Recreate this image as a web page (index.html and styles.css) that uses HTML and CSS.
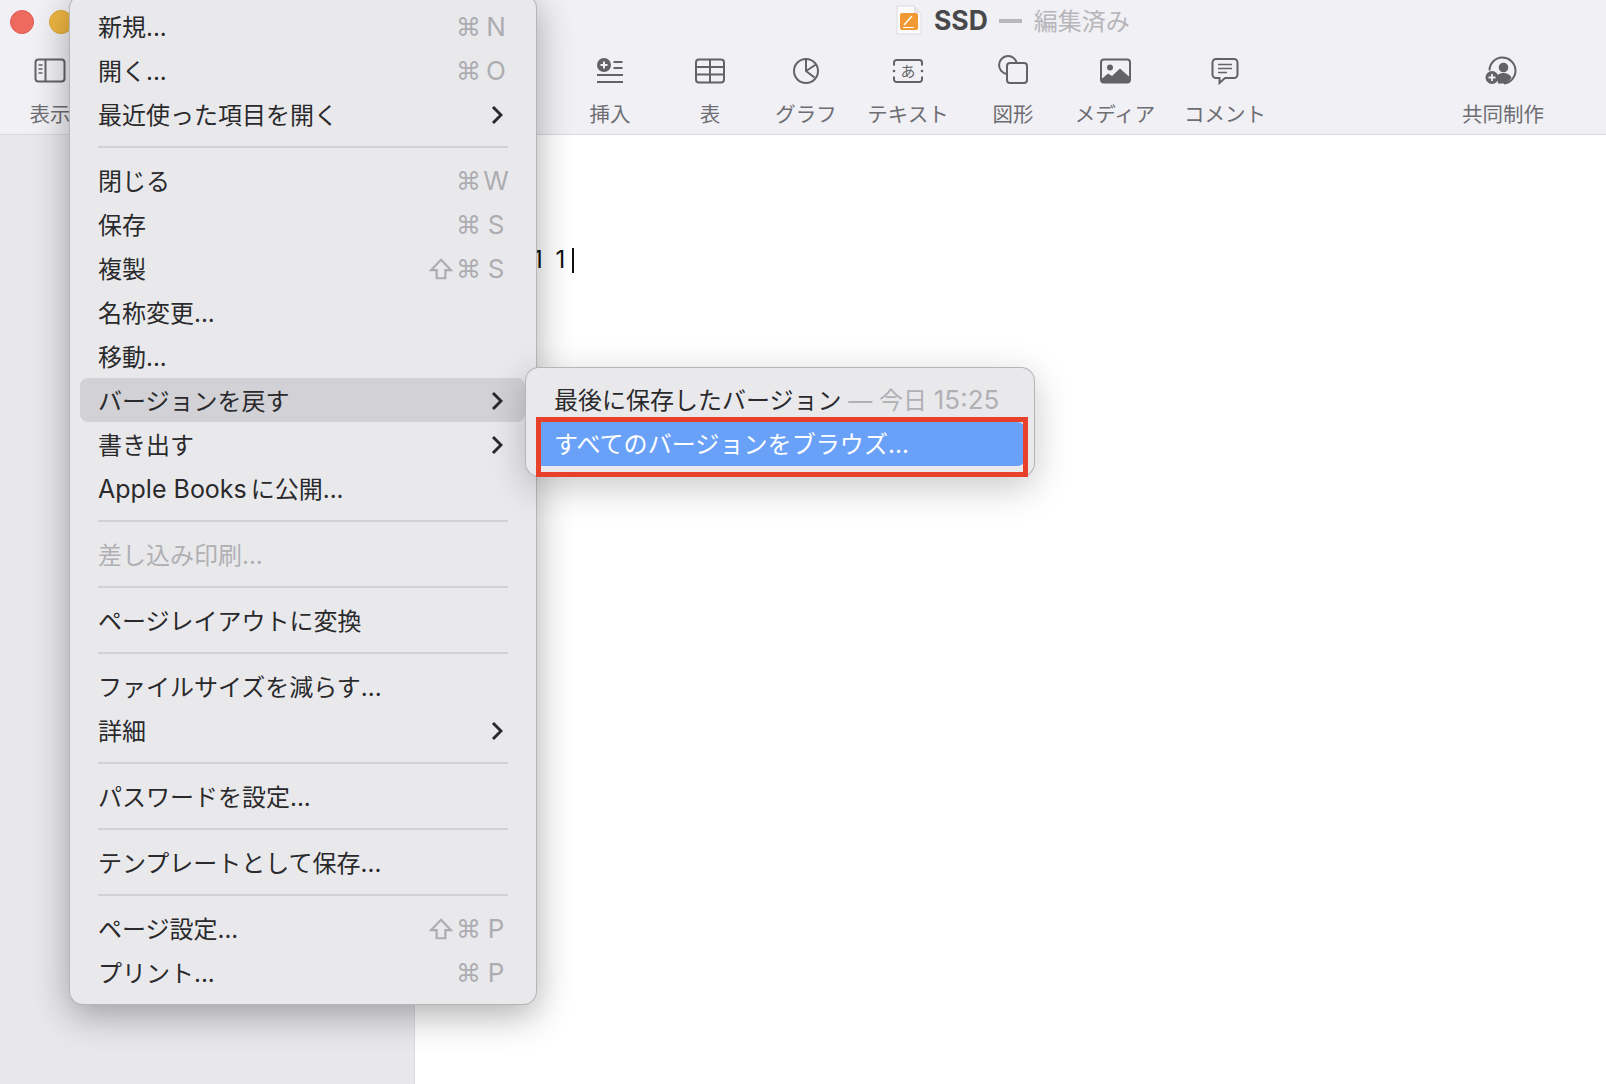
FILE: index.html
```html
<!DOCTYPE html>
<html lang="ja">
<head>
<meta charset="utf-8">
<title>SSD — 編集済み</title>
<link rel="stylesheet" href="styles.css">
</head>
<body>
<div class="window">
  <header class="toolbar">
    <div class="titlebar">
      <div class="lights"><span class="light red"></span><span class="light yellow"></span></div>
      <div class="title">
        <svg class="doc-icon" width="28" height="30" viewBox="0 0 28 30">
          <path d="M2 1h17l7 7v21H2z" fill="#fbfbfb" stroke="#dcdce0" stroke-width="1"/>
          <path d="M19 1l7 7h-7z" fill="#e4e4e8"/>
          <rect x="5" y="8" width="18" height="17" rx="2" fill="#f19a35"/>
          <path d="M9 20l8-9" stroke="#fff" stroke-width="1.4"/>
          <path d="M8 22.500h11" stroke="#fff" stroke-width="1"/>
        </svg>
        <span class="doc-name">SSD</span>
        <span class="doc-dash"></span>
        <span class="doc-state">編集済み</span>
      </div>
    </div>
    <div class="tools">
      <div class="tool">
        <svg width="32" height="26" viewBox="0 0 32 26"><rect x="1.500" y="1.500" width="29" height="22" rx="3" fill="none" stroke="#636366" stroke-width="2"/><path d="M11.500 2v21" stroke="#636366" stroke-width="2"/><path d="M4.500 7h4M4.500 11h4M4.500 15h4" stroke="#636366" stroke-width="1.300"/></svg>
        <span>表示</span>
      </div>
      <div class="tool-gap"></div>
      <div class="tool">
        <svg width="28" height="26" viewBox="0 0 28 26"><circle cx="8" cy="7" r="7" fill="#636366"/><path d="M8 3.500v7M4.500 7h7" stroke="#f0f0f5" stroke-width="2"/><path d="M17.500 4h9M17.500 10h9M1 17h26M1 24h26" stroke="#636366" stroke-width="2"/></svg>
        <span>挿入</span>
      </div>
      <div class="tool">
        <svg width="30" height="25" viewBox="0 0 30 25"><rect x="1" y="1" width="28" height="23" rx="3" fill="none" stroke="#636366" stroke-width="2"/><path d="M1 8.500h28M1 16h28M15 1v23" stroke="#636366" stroke-width="2"/></svg>
        <span>表</span>
      </div>
      <div class="tool">
        <svg width="28" height="28" viewBox="0 0 28 28"><circle cx="14" cy="14" r="12" fill="none" stroke="#636366" stroke-width="2"/><path d="M14 2.500V14l8.500 6.500M14 14l10-6.500" fill="none" stroke="#636366" stroke-width="2"/></svg>
        <span>グラフ</span>
      </div>
      <div class="tool">
        <svg class="tool-text" width="32" height="25" viewBox="0 0 32 25"><path d="M2 7V4a2.500 2.500 0 0 1 2.500-2.500h23A2.500 2.500 0 0 1 30 4v3M2 18v3a2.500 2.500 0 0 0 2.500 2.500h23A2.500 2.500 0 0 0 30 21v-3" fill="none" stroke="#636366" stroke-width="2"/><circle cx="2" cy="12.500" r="1.300" fill="#636366"/><circle cx="30" cy="12.500" r="1.300" fill="#636366"/><text x="16" y="18" text-anchor="middle" class="icon-glyph">あ</text></svg>
        <span>テキスト</span>
      </div>
      <div class="tool">
        <svg width="30" height="30" viewBox="0 1 30 30"><path d="M9 19A9 9 0 1 1 19 9" fill="none" stroke="#636366" stroke-width="2"/><rect x="9" y="8" width="20" height="20" rx="3" fill="none" stroke="#636366" stroke-width="2"/></svg>
        <span>図形</span>
      </div>
      <div class="tool">
        <svg width="31" height="25" viewBox="0 0 31 25"><rect x="1" y="1" width="29" height="23" rx="3" fill="none" stroke="#636366" stroke-width="2"/><circle cx="10" cy="9" r="3" fill="#636366"/><path d="M1 21l7-6 4 2.500L20 10l10 9v3a2 2 0 0 1-2 2H3a2 2 0 0 1-2-2z" fill="#636366"/></svg>
        <span>メディア</span>
      </div>
      <div class="tool">
        <svg width="28" height="27" viewBox="0 0 28 27"><path d="M5 1.500h18a3.500 3.500 0 0 1 3.500 3.500v12a3.500 3.500 0 0 1-3.500 3.500H14l-5.500 5v-5H5A3.500 3.500 0 0 1 1.500 17V5A3.500 3.500 0 0 1 5 1.500z" fill="none" stroke="#636366" stroke-width="2"/><path d="M7 7h14M7 11h14M7 15h9" stroke="#636366" stroke-width="1.600"/></svg>
        <span>コメント</span>
      </div>
      <div class="tool-gap"></div>
      <div class="tool">
        <svg width="32" height="27" viewBox="2 0 32 27"><path d="M4.500 13A13 13 0 1 1 19 26" fill="none" stroke="#636366" stroke-width="2"/><circle cx="18.500" cy="10" r="4.800" fill="#636366"/><path d="M11 21c1-4 4-5.500 7.500-5.500s6.500 1.500 8 4.500a12 12 0 0 1-8 6H13a7 7 0 0 0-2-5z" fill="#636366"/><circle cx="7" cy="20" r="6.500" fill="#636366"/><path d="M7 16.500v7M3.500 20h7" stroke="#f0f0f5" stroke-width="1.800"/></svg>
        <span>共同制作</span>
      </div>
    </div>
  </header>
  <main class="main">
    <aside class="sidebar"></aside>
    <section class="page">
      <p class="page-text">1 1<span class="caret"></span></p>
    </section>
  </main>
</div>

<nav class="menu file-menu">
  <div class="item"><span>新規...</span><span class="keys"><span class="k-cmd">⌘</span><span class="k-key">N</span></span></div>
  <div class="item"><span>開く...</span><span class="keys"><span class="k-cmd">⌘</span><span class="k-key">O</span></span></div>
  <div class="item"><span>最近使った項目を開く</span><svg class="chev" width="12" height="20" viewBox="0 0 12 20"><path d="M2 2l8 8-8 8" fill="none" stroke="#2a2a2c" stroke-width="3"/></svg></div>
  <div class="sep"></div>
  <div class="item"><span>閉じる</span><span class="keys"><span class="k-cmd">⌘</span><span class="k-key">W</span></span></div>
  <div class="item"><span>保存</span><span class="keys"><span class="k-cmd">⌘</span><span class="k-key">S</span></span></div>
  <div class="item"><span>複製</span><span class="keys"><svg class="k-shift" width="24" height="22" viewBox="0 0 22 20"><path d="M11 1.500L20 11h-5v7.500H7V11H2z" fill="none" stroke="#adadb1" stroke-width="2"/></svg><span class="k-cmd">⌘</span><span class="k-key">S</span></span></div>
  <div class="item"><span>名称変更...</span></div>
  <div class="item"><span>移動...</span></div>
  <div class="item active"><span>バージョンを戻す</span><svg class="chev" width="12" height="20" viewBox="0 0 12 20"><path d="M2 2l8 8-8 8" fill="none" stroke="#2a2a2c" stroke-width="3"/></svg></div>
  <div class="item"><span>書き出す</span><svg class="chev" width="12" height="20" viewBox="0 0 12 20"><path d="M2 2l8 8-8 8" fill="none" stroke="#2a2a2c" stroke-width="3"/></svg></div>
  <div class="item"><span><span class="latin">Apple Books</span>に公開...</span></div>
  <div class="sep"></div>
  <div class="item disabled"><span>差し込み印刷...</span></div>
  <div class="sep"></div>
  <div class="item"><span>ページレイアウトに変換</span></div>
  <div class="sep"></div>
  <div class="item"><span>ファイルサイズを減らす...</span></div>
  <div class="item"><span>詳細</span><svg class="chev" width="12" height="20" viewBox="0 0 12 20"><path d="M2 2l8 8-8 8" fill="none" stroke="#2a2a2c" stroke-width="3"/></svg></div>
  <div class="sep"></div>
  <div class="item"><span>パスワードを設定...</span></div>
  <div class="sep"></div>
  <div class="item"><span>テンプレートとして保存...</span></div>
  <div class="sep"></div>
  <div class="item"><span>ページ設定...</span><span class="keys"><svg class="k-shift" width="24" height="22" viewBox="0 0 22 20"><path d="M11 1.500L20 11h-5v7.500H7V11H2z" fill="none" stroke="#adadb1" stroke-width="2"/></svg><span class="k-cmd">⌘</span><span class="k-key">P</span></span></div>
  <div class="item"><span>プリント...</span><span class="keys"><span class="k-cmd">⌘</span><span class="k-key">P</span></span></div>
</nav>

<nav class="menu sub-menu">
  <div class="item"><span>最後に保存したバージョン <span class="muted">— 今日 <span class="time">15:25</span></span></span></div>
  <div class="item selected"><span>すべてのバージョンをブラウズ...</span></div>
  <div class="callout"></div>
</nav>
</body>
</html>
```

FILE: styles.css
```css
* { box-sizing: border-box; }
html, body { margin: 0; padding: 0; }
body {
  width: 1606px;
  height: 1084px;
  overflow: hidden;
  position: relative;
  background: #fff;
  font-family: Inter, "Noto Sans CJK JP", sans-serif;
  color: #2a2a2c;
}

.window { display: flex; flex-direction: column; height: 1084px; }

.toolbar {
  height: 135px;
  flex: none;
  background: #f0f0f5;
  border-bottom: 1px solid #d9d9dc;
}
.titlebar { height: 44px; display: flex; align-items: center; }
.lights { display: flex; gap: 15px; padding-left: 10px; }
.light { width: 24px; height: 24px; border-radius: 50%; }
.red { background: #ee6a5f; border: 1px solid #e05a50; }
.yellow { background: #eeb643; border: 1px solid #dda534; }
.title { display: flex; align-items: center; margin-left: 822px; margin-bottom: 5px; }
.doc-icon { margin-right: 11px; }
.doc-name { font-size: 26.500px; font-weight: 700; color: #48484a; }
.doc-dash { width: 23px; height: 4px; background: #b8b8bc; margin: 2px 12px 0 11px; }
.doc-state { font-size: 24px; color: #b7b7bb; margin-bottom: 1px; }

.tools {
  display: grid;
  grid-template-columns: 100px 460px 100px 100px 92px 112px 98px 106px 114px 171px 100px;
  height: 90px;
}
.tool {
  display: flex;
  flex-direction: column;
  align-items: center;
  font-size: 20.500px;
  line-height: 30px;
  color: #6d6d72;
}
.tool svg { height: 30px; flex: none; margin-top: 12px; margin-bottom: 14px; overflow: visible; }
.icon-glyph { font-size: 15px; fill: #636366; font-family: "Noto Sans CJK JP", sans-serif; }

.main { flex: 1; display: flex; min-height: 0; }
.sidebar { width: 415px; flex: none; background: #e8e8ec; box-shadow: inset -1px 0 0 #dcdce0; }
.page { flex: 1; background: #fff; padding: 112px 0 0 118px; }
.page-text {
  margin: 0;
  display: flex;
  align-items: center;
  font-size: 24px;
  line-height: 26px;
  letter-spacing: 3px;
  color: #111;
  font-family: Inter, sans-serif;
}
.caret { width: 2px; height: 25px; background: #111; margin-left: 4px; }

.menu {
  position: absolute;
  background: #e9e9ec;
  border: 1px solid rgba(0, 0, 0, .22);
  font-size: 24px;
}
.file-menu {
  left: 69px;
  top: -6px;
  width: 468px;
  height: 1011px;
  padding: 9px 11px 9px 10px;
  border-radius: 14px;
  box-shadow: 0 10px 36px rgba(0, 0, 0, .32);
}
.sub-menu {
  left: 525px;
  top: 367px;
  width: 510px;
  height: 110px;
  padding: 10px 10px;
  border-radius: 14px;
  box-shadow: 0 10px 36px rgba(0, 0, 0, .22);
}
.item {
  height: 44px;
  display: flex;
  align-items: center;
  justify-content: space-between;
  padding: 0 17px 0 18px;
  border-radius: 8px;
  white-space: nowrap;
}
.item > span:first-child { margin-bottom: 2px; }
.sub-menu .item > span:first-child { margin-bottom: 3px; }
.latin { font-size: 25px; margin-right: 4px; }
.time { font-size: 26px; }
.active { background: #d1d1d6; }
.disabled { color: #b0b0b4; }
.selected { background: #69a1f9; color: #fff; border-radius: 6px; letter-spacing: .08px; }
.muted { color: #b0b0b4; }
.sep { height: 2px; margin: 10px 17px 10px 18px; background: #d2d2d6; }
.chev { margin: 2px 5px 0 0; }

.keys { display: flex; align-items: center; color: #adadb1; margin: 2px -2px 0 0; }
.k-cmd { width: 24px; margin-top: 2px; text-align: center; font-family: "DejaVu Sans", sans-serif; font-size: 25px; line-height: 30px; }
.k-key { width: 28px; margin: 0 0 2px 2px; text-align: center; font-size: 26px; }
.k-shift { margin-right: 3px; }

.callout {
  position: absolute;
  left: 10px;
  top: 49px;
  width: 492px;
  height: 60px;
  border: 5px solid #e8402a;
}
```
